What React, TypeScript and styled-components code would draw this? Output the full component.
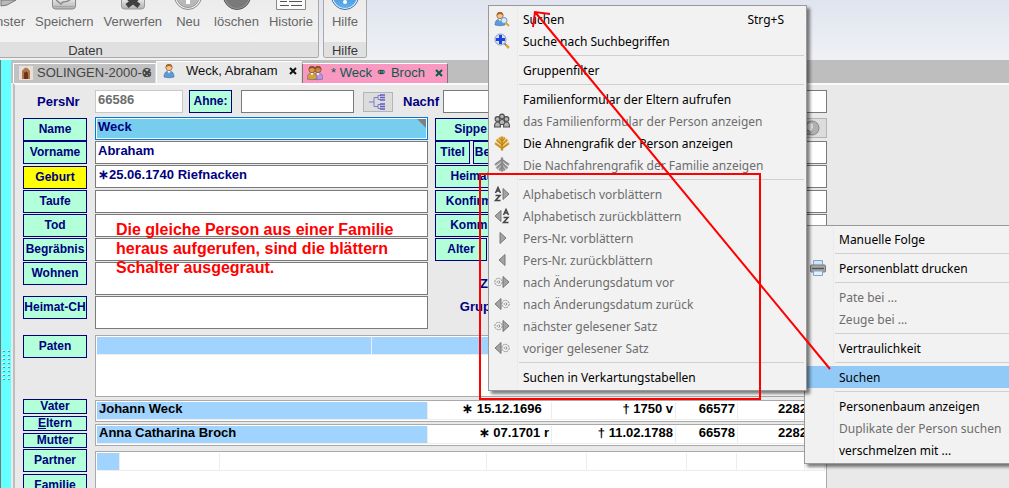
import React from "react";
import styled, { createGlobalStyle, css } from "styled-components";

const NAVY = "#000080";
const MINT = "#b3ffd9";
const ROW_BLUE = "#a0d4ff";

const GlobalStyle = createGlobalStyle`
  * { box-sizing: border-box; }
  body { margin: 0; font-family: "Liberation Sans", Arial, sans-serif; font-size: 13px; }
  button, input { font-family: inherit; margin: 0; }
`;

const Window = styled.div`
  position: relative;
  display: flex;
  flex-direction: column;
  height: 100vh;
  overflow: hidden;
  background: #e9e9e9;
`;

/* ---------- ribbon ---------- */

const Ribbon = styled.header`
  display: flex;
  flex: none;
  align-items: flex-start;
  gap: 4px;
  height: 60px;
  background: linear-gradient(#dfe4ef, #f0f1f4);
`;

const RibbonGroup = styled.section<{ $scrolled?: boolean }>`
  display: flex;
  flex: none;
  flex-direction: column;
  height: 58px;
  border: 1px solid #a9a9a9;
  border-top: 0;
  border-radius: 0 0 3px 3px;
  background: linear-gradient(#ececec, #f5f5f5);
  overflow: hidden;
  ${(p) => p.$scrolled && css`width: 467px; margin-left: -148px;`}
`;

const RibbonTools = styled.div`
  display: flex;
  flex: 1;
  justify-content: flex-end;
  gap: 10px;
  padding: 0 5px;
`;

const RibbonButton = styled.button`
  display: flex;
  flex-direction: column;
  align-items: center;
  gap: 4px;
  padding: 0;
  border: 0;
  background: none;
  color: #666;
  font-size: 13px;
  line-height: 16px;
`;

const RibbonCaption = styled.div`
  height: 15px;
  background: #e0e0e0;
  color: #383838;
  line-height: 17px;
  text-align: center;
`;

/* ---------- workspace ---------- */

const Workspace = styled.div`
  display: flex;
  flex: 1;
  min-height: 0;
`;

const Splitter = styled.div`
  display: flex;
  flex: none;
  align-items: flex-start;
  width: 11px;
  padding: 290px 0 0 1px;
  border-left: 1px solid #777;
  background: #66ffff;
`;

const Document = styled.main`
  display: flex;
  flex: 1;
  flex-direction: column;
  min-width: 0;
`;

const TabStrip = styled.nav`
  display: flex;
  flex: none;
  align-items: flex-end;
  height: 23px;
  padding-left: 2px;
  background: #bebebe;
`;

const Tab = styled.div<{ $kind: "idle" | "active" | "family" }>`
  display: flex;
  align-items: center;
  width: ${(p) => (p.$kind === "idle" ? 143 : 146)}px;
  height: ${(p) => (p.$kind === "active" ? 22 : 20)}px;
  padding: 0 4px ${(p) => (p.$kind === "active" ? 3 : 1)}px;
  border-top: 1px solid #fff;
  border-left: 1px solid ${(p) => (p.$kind === "family" ? "#777" : "#fff")};
  border-right: 1px solid ${(p) => (p.$kind === "family" ? "#777" : "#ddd")};
  background: ${(p) => ({ idle: "#c2c2c2", active: "#e9e9e9", family: "#f999c1" })[p.$kind]};
  color: ${(p) => ({ idle: "#444", active: "#111", family: "#0b5a4c" })[p.$kind]};
`;

const TabTitle = styled.a<{ $indent: number }>`
  flex: 1;
  min-width: 0;
  padding-left: ${(p) => p.$indent}px;
  color: inherit;
  line-height: 18px;
  text-decoration: none;
  white-space: pre;
`;

const Rings = styled.span`
  font-family: "DejaVu Sans", sans-serif;
  font-size: 14px;
  line-height: 14px;
`;

const TabClose = styled.button`
  display: flex;
  flex: none;
  padding: 0;
  border: 0;
  background: none;
  color: inherit;
`;

const Panel = styled.div`
  flex: 1;
  min-height: 0;
  padding: 5px 182px 0 8px;
  border-top: 2px solid #fafafa;
  border-left: 2px solid #bebebe;
  margin-left: 2px;
  overflow: hidden;
`;

/* ---------- form ---------- */

const HeaderRow = styled.div`
  display: grid;
  grid-template-columns: 72px 94px 52px 122px 40px 40px 1fr;
  align-items: center;
  height: 27px;
  padding-bottom: 4px;
`;

const Caption = styled.label<{ $indent?: number }>`
  flex: none;
  padding-left: ${(p) => p.$indent ?? 0}px;
  color: ${NAVY};
  font-weight: bold;
  line-height: 22px;
`;

const Field = styled.input<{ $w?: string; $tall?: boolean; $active?: boolean; $muted?: boolean }>`
  width: ${(p) => p.$w ?? "100%"};
  min-width: 0;
  height: ${(p) => (p.$tall ? 33 : 23)}px;
  padding: 0 2px 5px;
  border: 1px solid ${(p) => (p.$muted ? "#c8c8c8" : "#7a7a7a")};
  border-radius: 0;
  outline: 0;
  background: #fff;
  color: ${(p) => (p.$muted ? "#6d6d6d" : NAVY)};
  font-size: 13px;
  font-weight: bold;
  ${(p) => p.$active && css`
    display: block;
    border-color: #0078d7;
    box-shadow: inset 0 0 0 1px #fff;
    background: #76cdee;
  `}
`;

const CornerMark = styled.div`
  position: relative;
  &::after {
    content: "";
    position: absolute;
    top: 2px;
    right: 2px;
    border-top: 9px solid #808080;
    border-left: 9px solid transparent;
  }
`;

const LabelButton = styled.button<{ $w?: number; $low?: boolean; $yellow?: boolean }>`
  display: flex;
  flex: none;
  align-items: center;
  justify-content: center;
  width: ${(p) => p.$w ?? 64}px;
  height: ${(p) => (p.$low ? 15 : 23)}px;
  padding: 0;
  border: 1px solid ${NAVY};
  background: ${(p) => (p.$yellow ? "#ffff00" : MINT)};
  color: ${NAVY};
  font-size: 12px;
  font-weight: bold;
  line-height: 13px;
  white-space: nowrap;
`;

const IconButton = styled.button<{ $w: number }>`
  display: flex;
  align-items: center;
  justify-content: center;
  width: ${(p) => p.$w}px;
  height: 20px;
  padding: 0;
  border: 1px solid #b4b4b4;
  background: #dcdcdc;
`;

const FieldGrid = styled.div`
  display: grid;
  grid-template-columns: 64px 333px 1fr;
  grid-template-rows: 24px 24px 25px 24px 24px 24px 34px 34px;
  column-gap: 8px;
`;

const LabelCell = styled.div<{ $align?: string }>`
  align-self: ${(p) => p.$align ?? "start"};
`;

const Side = styled.div<{ $align?: string }>`
  display: flex;
  align-self: ${(p) => p.$align ?? "start"};
  gap: 3px;
  margin-left: -1px;
`;

const SideCaption = styled(Caption)`
  width: 71px;
  text-align: right;
`;

const Spacer = styled.span`
  flex: 1;
`;

const Section = styled.div<{ $h: number }>`
  display: grid;
  grid-template-columns: 64px 1fr;
  column-gap: 8px;
  height: ${(p) => p.$h}px;
`;

const Stack = styled.div<{ $pad?: number }>`
  display: flex;
  flex-direction: column;
  gap: 2px;
  padding-top: ${(p) => p.$pad ?? 0}px;
`;

const ListBox = styled.div<{ $h: number }>`
  height: ${(p) => p.$h}px;
  padding: 1px;
  border: 1px solid #a9a9a9;
  background: #fff;
  overflow: hidden;
`;

const DataTable = styled.table`
  width: 100%;
  border-collapse: separate;
  border-spacing: 0;
  table-layout: fixed;
  font-weight: bold;
`;

const Cell = styled.td<{ $on?: boolean; $right?: boolean; $indent?: number }>`
  height: 18px;
  padding: 0 2px 3px ${(p) => p.$indent ?? 2}px;
  border-right: 1px solid #ededed;
  border-bottom: 1px solid #ededed;
  background: ${(p) => (p.$on ? ROW_BLUE : "#fff")};
  color: #000;
  font-size: 13px;
  line-height: 14px;
  text-align: ${(p) => (p.$right ? "right" : "left")};
  white-space: pre;
`;

const Note = styled.p`
  position: absolute;
  top: 220px;
  left: 116px;
  margin: 0;
  color: #ff0000;
  font-size: 16px;
  font-weight: bold;
  line-height: 19px;
`;

/* ---------- menus ---------- */

const Menu = styled.ul<{ $sub?: boolean }>`
  position: absolute;
  z-index: ${(p) => (p.$sub ? 2 : 1)};
  margin: 0;
  padding: 2px;
  border: 1px solid #999;
  background: linear-gradient(90deg, #f1f1f1 28px, #ebebeb 28px, #ebebeb 29px, #f2f2f2 29px);
  box-shadow: 3px 3px 3px rgba(0, 0, 0, 0.5);
  font-family: "Noto Sans", "Open Sans", sans-serif;
  list-style: none;
  ${(p) =>
    p.$sub
      ? css`top: 5px; left: 488px; width: 319px;`
      : css`top: 225px; left: 804px; right: -4px;`}
`;

const Item = styled.button<{ $off?: boolean; $hot?: boolean }>`
  display: grid;
  grid-template-columns: 32px 1fr auto;
  align-items: center;
  width: 100%;
  height: 22px;
  padding: 0 20px 0 0;
  border: 0;
  background: ${(p) => (p.$hot ? "#91c9f7" : "none")};
  color: ${(p) => (p.$off ? "#6d6d6d" : "#000")};
  font-size: 12px;
  text-align: left;
  white-space: nowrap;
`;

const ItemText = styled.span`
  padding-top: 2px;
  line-height: 20px;
`;

const ItemIcon = styled.span`
  display: flex;
  padding-left: 3px;
`;

const Separator = styled.li`
  height: 7px;
  padding: 3px 0 0 28px;
  &::before {
    content: "";
    display: block;
    height: 1px;
    background: #d0d0d0;
  }
`;

const Annotation = styled.svg`
  position: absolute;
  z-index: 3;
  top: 0;
  left: 0;
  pointer-events: none;
`;

/* ---------- drawings ---------- */

const RibbonIcon = ({ kind }: { kind: string }) => (
  <svg width="32" height="10" viewBox="0 0 32 10">
    <defs>
      <linearGradient id="metal" x1="0" y1="0" x2="0" y2="1">
        <stop offset="0" stopColor="#f4f4f4" />
        <stop offset="1" stopColor="#b0b0b0" />
      </linearGradient>
      <linearGradient id="blue" x1="0" y1="0" x2="0" y2="1">
        <stop offset="0" stopColor="#2f7fd0" />
        <stop offset="1" stopColor="#63b0ee" />
      </linearGradient>
    </defs>
    {kind === "window" && <path d="M14 0h15l-9 5-6 1z" fill="#bbb" stroke="#777" />}
    {kind === "save" && (
      <>
        <path d="M4.500-3h23v9q0 3-3 3h-17q-3 0-3-3z" fill="url(#metal)" stroke="#888" />
        <path d="M6 6.500h20" stroke="#a4a4a4" />
        <path d="M8 0l5 4 2-2q5 0 8-3" fill="none" stroke="#888" strokeWidth="1.500" />
      </>
    )}
    {kind === "discard" && (
      <>
        <path d="M4.500-3h23v9q0 3-3 3h-17q-3 0-3-3z" fill="url(#metal)" stroke="#999" />
        <path d="M9-4L22 6M23-4L10 6" stroke="#404040" strokeWidth="5" />
      </>
    )}
    {kind === "new" && (
      <>
        <circle cx="16" cy="-4" r="13.500" fill="#eee" stroke="#8c8c8c" />
        <circle cx="16" cy="-4" r="11.500" fill="#b8b8b8" stroke="#999" />
        <path d="M16-8v12" stroke="#fff" strokeWidth="4" />
      </>
    )}
    {kind === "delete" && (
      <>
        <circle cx="16" cy="-4" r="13.500" fill="#999" stroke="#555" />
        <circle cx="16" cy="-4" r="12" fill="#7a7a7a" />
      </>
    )}
    {kind === "history" && (
      <>
        <path d="M1.500-2h29v11.500h-29z" fill="#fafafa" stroke="#888" />
        <path d="M5 1.500h7m2 0h13M5 5.500h9m2 0h11" stroke="#555" />
      </>
    )}
    {kind === "help" && (
      <>
        <circle cx="16" cy="-4" r="13.500" fill="#e8f2fa" stroke="#3a6fa8" />
        <circle cx="16" cy="-4" r="12" fill="url(#blue)" />
        <circle cx="16" cy="2" r="2" fill="#fff" />
      </>
    )}
  </svg>
);

const Cross = () => (
  <svg width="8" height="8" viewBox="0 0 8 8">
    <path d="M1 1l6 6M7 1L1 7" stroke="currentColor" strokeWidth="2" />
  </svg>
);

const Person = ({ x = 0, hair = "#a8652a", coat = "#5b9bd8", skin = "#f0c490" }) => (
  <g transform={`translate(${x} 0)`}>
    <path d="M1 14q0-6 5-6t5 6q-5 1.500-10 0z" fill={coat} stroke="#3d6da0" strokeWidth=".6" />
    <path d="M4.500 8L6 10.500 7.500 8z" fill="#fff" />
    <circle cx="6" cy="4.500" r="3.200" fill={skin} stroke={hair} strokeWidth=".8" />
    <path d="M2.800 4.500Q2.600 1 6 1t3.200 3.500Q7.500 2.800 6 3T2.800 4.500z" fill={hair} />
  </g>
);

const Sign = ({ kind }: { kind: string }) => {
  const right = "M9 2.500L15 8L9 13.500z";
  const left = "M7 2.500L1 8L7 13.500z";
  const grey = { fill: "#a4a4a4", stroke: "#6e6e6e", strokeWidth: 0.9 };
  const ring = { fill: "none", stroke: "#8a8a8a", strokeDasharray: "2 .8" };
  return (
    <svg width="16" height="16" viewBox="0 0 16 16">
      {kind === "archive" && (
        <>
          <rect x="1" y="1" width="14" height="14" fill="#e8e0d4" />
          <path d="M4 14V6q4-7 8 0v8z" fill="#b07848" />
          <path d="M6 14V8q2-3 4 0v6z" fill="#6e3420" />
        </>
      )}
      {kind === "person" && <Person x={2} />}
      {kind === "family" && (
        <>
          <Person x={5} coat="#c490e0" hair="#8a5420" skin="#c88a48" />
          <Person x={-1} coat="#d8a030" hair="#8a5420" skin="#d89a50" />
        </>
      )}
      {kind === "searchPerson" && (
        <>
          <Person />
          <circle cx="10" cy="9.500" r="3" fill="#d4ecfa" stroke="#6a94bc" />
          <path d="M12 12l3 3" stroke="#e0a030" strokeWidth="2" />
        </>
      )}
      {kind === "zoom" && (
        <>
          <circle cx="6.500" cy="6.500" r="5.500" fill="#cfe2f8" stroke="#8098b8" />
          <path d="M6.500 2v9M2 6.500h9" stroke="#2040e0" strokeWidth="3" />
          <path d="M10.500 10.500l2 2" stroke="#888" strokeWidth="2" />
          <path d="M12.500 12.500l2.500 2.500" stroke="#e8a838" strokeWidth="2.500" />
        </>
      )}
      {kind === "group" && (
        <>
          {[[8, 3.5], [3.5, 6], [12.5, 6]].map(([x, y]) => (
            <g key={x} fill="#b5b5b5" stroke="#4c4c4c" strokeWidth="1.100">
              <path d={`M${x - 3} ${y + 8}q0-5 3-5t3 5z`} />
              <circle cx={x} cy={y} r="2.400" />
            </g>
          ))}
        </>
      )}
      {(kind === "tree" || kind === "treeGrey") && (
        <g stroke={kind === "tree" ? "#a87818" : "#777"} fill="none" transform={kind === "tree" ? "" : "matrix(1 0 0 -1 0 16)"}>
          <path d="M8 15.500V1.500M8 13L1 8M8 13l7-5M8 9.500L2.500 4.500M8 9.500l5.500-5M8 6L5 2.500M8 6l3-3.500" stroke={kind === "tree" ? "#e0a832" : "#a0a0a0"} strokeWidth="2.400" />
          <path d="M8 15.500V1.500M8 13.500L1.500 9M8 13.500l6.500-4.500M8 10L3 5.500M8 10l5-4.500M8 6.500L5.500 3.500M8 6.500l2.500-3" strokeWidth=".8" />
        </g>
      )}
      {(kind === "azNext" || kind === "azPrev") && (
        <g transform={kind === "azNext" ? "" : "translate(8 0)"} fill="none" stroke="#444" strokeWidth="1.500">
          <path d="M1.500 7L4 1.500 6.500 7M2.500 5h3M1.500 9.500h4.500L1.500 14.500h5" />
        </g>
      )}
      {kind === "azNext" && <path d={right} {...grey} />}
      {kind === "azPrev" && <path d={left} {...grey} />}
      {kind === "next" && <path d="M6 2.500L12 8L6 13.500z" {...grey} />}
      {kind === "prev" && <path d="M11 2.500L5 8L11 13.500z" {...grey} />}
      {kind === "dotNext" && (
        <>
          <circle cx="4.500" cy="8" r="3.700" {...ring} />
          <circle cx="4.500" cy="8" r="1.300" {...ring} />
          <path d={right} {...grey} />
        </>
      )}
      {kind === "dotPrev" && (
        <>
          <circle cx="11.500" cy="8" r="3.700" {...ring} />
          <circle cx="11.500" cy="8" r="1.300" {...ring} />
          <path d={left} {...grey} />
        </>
      )}
      {kind === "printer" && (
        <>
          <path d="M3.500 5V.5h9V5" fill="#cfe6fa" stroke="#7fa6c8" />
          <rect x=".5" y="5" width="15" height="7" rx="1" fill="#a8a8a8" stroke="#777" />
          <path d="M2 8.500h12" stroke="#555" strokeWidth="1.500" />
          <path d="M3.500 11h9v4.500h-9z" fill="#e2f0fc" stroke="#7fa6c8" />
        </>
      )}
      {kind === "globe" && (
        <>
          <circle cx="8" cy="8" r="7" fill="#b0b0b0" stroke="#888" />
          <path d="M4 4q5-2 5 2T5 12Q2 7 4 4z" fill="#e4e4e4" />
          <circle cx="4" cy="12.500" r="2" fill="#bbb" stroke="#777" />
        </>
      )}
    </svg>
  );
};

const Pedigree = () => (
  <svg width="18" height="16" viewBox="0 0 18 16" fill="none" stroke="#7c7cc8">
    <path d="M0 8h5M5 3.500v9M5 3.500h4M5 12.500h4M9 1.500v4M9 10.500v4M9 1.500h3M9 5.500h3M9 10.500h3M9 14.500h3" />
    <path d="M11 1h5M11 3.500h5M11 6h5M11 10h5M11 12.500h5M11 15h5" stroke="#5c5cc8" strokeWidth="1.500" />
  </svg>
);

const Grip = () => (
  <svg width="9" height="32" viewBox="0 0 9 32">
    {Array.from({ length: 8 }, (_, i) => (
      <g key={i}>
        <path d={`M0 ${i * 4 + 0.5}h2M5 ${i * 4 + 0.5}h2`} stroke="#e8ffff" />
        <path d={`M1 ${i * 4 + 1.5}h2M6 ${i * 4 + 1.5}h2`} stroke="#3fa0a8" />
      </g>
    ))}
  </svg>
);

/* ---------- content ---------- */

const tools = [
  ["Fenster", "window"],
  ["Speichern", "save"],
  ["Verwerfen", "discard"],
  ["Neu", "new"],
  ["löschen", "delete"],
  ["Historie", "history"],
];

type Entry = { text: string; icon?: string; off?: boolean; hot?: boolean; keys?: string } | null;

const searchMenu: Entry[] = [
  { text: "Suchen", icon: "searchPerson", keys: "Strg+S" },
  { text: "Suche nach Suchbegriffen", icon: "zoom" },
  null,
  { text: "Gruppenfilter" },
  null,
  { text: "Familienformular der Eltern aufrufen" },
  { text: "das Familienformular der Person anzeigen", icon: "group", off: true },
  { text: "Die Ahnengrafik der Person anzeigen", icon: "tree" },
  { text: "Die Nachfahrengrafik der Familie anzeigen", icon: "treeGrey", off: true },
  null,
  { text: "Alphabetisch vorblättern", icon: "azNext", off: true },
  { text: "Alphabetisch zurückblättern", icon: "azPrev", off: true },
  { text: "Pers-Nr. vorblättern", icon: "next", off: true },
  { text: "Pers-Nr. zurückblättern", icon: "prev", off: true },
  { text: "nach Änderungsdatum vor", icon: "dotNext", off: true },
  { text: "nach Änderungsdatum zurück", icon: "dotPrev", off: true },
  { text: "nächster gelesener Satz", icon: "dotNext", off: true },
  { text: "voriger gelesener Satz", icon: "dotPrev", off: true },
  null,
  { text: "Suchen in Verkartungstabellen" },
];

const contextMenu: Entry[] = [
  { text: "Manuelle Folge" },
  null,
  { text: "Personenblatt drucken", icon: "printer" },
  null,
  { text: "Pate bei ...", off: true },
  { text: "Zeuge bei ...", off: true },
  null,
  { text: "Vertraulichkeit" },
  null,
  { text: "Suchen", hot: true },
  null,
  { text: "Personenbaum anzeigen" },
  { text: "Duplikate der Person suchen", off: true },
  { text: "verschmelzen mit ..." },
];

const MenuList = ({ entries, sub }: { entries: Entry[]; sub?: boolean }) => (
  <Menu $sub={sub} role="menu">
    {entries.map((e, i) =>
      e ? (
        <li key={i} role="none">
          <Item role="menuitem" disabled={e.off} $off={e.off} $hot={e.hot}>
            <ItemIcon>{e.icon && <Sign kind={e.icon} />}</ItemIcon>
            <ItemText>{e.text}</ItemText>
            {e.keys && <ItemText>{e.keys}</ItemText>}
          </Item>
        </li>
      ) : (
        <Separator key={i} role="separator" />
      )
    )}
  </Menu>
);

const Parent = ({ cells }: { cells: string[] }) => (
  <ListBox $h={22}>
    <DataTable>
      <colgroup>
        <col width="331" />
        <col width="124" />
        <col width="124" />
        <col width="62" />
        <col />
      </colgroup>
      <tbody>
        <tr>
          {cells.map((c, i) => (
            <Cell key={i} $on={i === 0} $right={i > 0 && i < 4} $indent={i === 4 ? 40 : 2}>
              {c}
            </Cell>
          ))}
        </tr>
      </tbody>
    </DataTable>
  </ListBox>
);

export default function App() {
  return (
    <Window>
      <GlobalStyle />
      <Ribbon>
        <RibbonGroup $scrolled>
          <RibbonTools>
            {tools.map(([label, kind]) => (
              <RibbonButton key={label}>
                <RibbonIcon kind={kind} />
                <span>{label}</span>
              </RibbonButton>
            ))}
          </RibbonTools>
          <RibbonCaption>Daten</RibbonCaption>
        </RibbonGroup>
        <RibbonGroup>
          <RibbonTools>
            <RibbonButton>
              <RibbonIcon kind="help" />
              <span>Hilfe</span>
            </RibbonButton>
          </RibbonTools>
          <RibbonCaption>Hilfe</RibbonCaption>
        </RibbonGroup>
      </Ribbon>

      <Workspace>
        <Splitter>
          <Grip />
        </Splitter>
        <Document>
          <TabStrip>
            <Tab $kind="idle">
              <Sign kind="archive" />
              <TabTitle href="#archiv" $indent={3}>SOLINGEN-2000-G</TabTitle>
              <TabClose aria-label="Schließen"><Cross /></TabClose>
            </Tab>
            <Tab $kind="active">
              <Sign kind="person" />
              <TabTitle href="#person" $indent={9}>Weck, Abraham</TabTitle>
              <TabClose aria-label="Schließen"><Cross /></TabClose>
            </Tab>
            <Tab $kind="family">
              <Sign kind="family" />
              <TabTitle href="#familie" $indent={8}>* Weck <Rings>⚭</Rings> Broch</TabTitle>
              <TabClose aria-label="Schließen"><Cross /></TabClose>
            </Tab>
          </TabStrip>

          <Panel>
            <HeaderRow>
              <Caption htmlFor="persnr" $indent={14}>PersNr</Caption>
              <Field id="persnr" $w="88px" $muted defaultValue="66586" />
              <LabelButton $w={43}>Ahne:</LabelButton>
              <Field aria-label="Ahne" $w="113px" />
              <IconButton $w={30} aria-label="Stammbaum"><Pedigree /></IconButton>
              <Caption htmlFor="nachf">Nachf</Caption>
              <Field id="nachf" />
            </HeaderRow>

            <FieldGrid>
              <LabelCell $align="end"><LabelButton>Name</LabelButton></LabelCell>
              <CornerMark><Field aria-label="Name" $active defaultValue="Weck" /></CornerMark>
              <Side $align="end">
                <LabelButton $w={71}>Sippe</LabelButton>
                <Spacer />
                <IconButton $w={30} aria-label="Karte"><Sign kind="globe" /></IconButton>
              </Side>

              <LabelCell><LabelButton>Vorname</LabelButton></LabelCell>
              <Field aria-label="Vorname" defaultValue="Abraham" />
              <Side>
                <LabelButton $w={35}>Titel</LabelButton>
                <LabelButton $w={35}>Beruf</LabelButton>
                <Field aria-label="Titel und Beruf" />
              </Side>

              <LabelCell $align="center"><LabelButton $yellow>Geburt</LabelButton></LabelCell>
              <Field aria-label="Geburt" defaultValue="∗25.06.1740 Riefnacken" />
              <Side>
                <LabelButton $w={71}>Heimat</LabelButton>
                <Field aria-label="Heimat" />
              </Side>

              <LabelCell><LabelButton>Taufe</LabelButton></LabelCell>
              <Field aria-label="Taufe" />
              <Side>
                <LabelButton $w={71}>Konfirm.</LabelButton>
                <Field aria-label="Konfirmation" />
              </Side>

              <LabelCell><LabelButton>Tod</LabelButton></LabelCell>
              <Field aria-label="Tod" />
              <Side>
                <LabelButton $w={71}>Komm.</LabelButton>
                <Field aria-label="Kommunion" />
              </Side>

              <LabelCell><LabelButton>Begräbnis</LabelButton></LabelCell>
              <Field aria-label="Begräbnis" />
              <Side>
                <LabelButton $w={52}>Alter</LabelButton>
                <Field aria-label="Alter" />
              </Side>

              <LabelCell><LabelButton>Wohnen</LabelButton></LabelCell>
              <Field aria-label="Wohnen" $tall />
              <Side $align="end">
                <SideCaption htmlFor="zivil">Zivil</SideCaption>
                <Field id="zivil" />
              </Side>

              <LabelCell><LabelButton>Heimat-CH</LabelButton></LabelCell>
              <Field aria-label="Heimat-CH" $tall />
              <Side>
                <SideCaption htmlFor="gruppe">Gruppe</SideCaption>
                <Field id="gruppe" />
              </Side>
            </FieldGrid>

            <Section $h={69}>
              <Stack $pad={5}>
                <LabelButton>Paten</LabelButton>
              </Stack>
              <Stack $pad={5}>
                <ListBox $h={62}>
                  <DataTable>
                    <colgroup>
                      <col width="275" />
                      <col />
                    </colgroup>
                    <tbody>
                      <tr><Cell $on /><Cell $on /></tr>
                    </tbody>
                  </DataTable>
                </ListBox>
              </Stack>
            </Section>

            <Section $h={50}>
              <Stack>
                <LabelButton $low>Vater</LabelButton>
                <LabelButton $low><u>E</u>ltern</LabelButton>
                <LabelButton $low>Mutter</LabelButton>
              </Stack>
              <Stack $pad={1}>
                <Parent cells={["Johann Weck", "∗ 15.12.1696  ", "† 1750 v", "66577", "2282"]} />
                <Parent cells={["Anna Catharina Broch", "∗ 07.1701 r", "† 11.02.1788", "66578", "2282"]} />
              </Stack>
            </Section>

            <Section $h={80}>
              <Stack>
                <LabelButton>Partner</LabelButton>
                <LabelButton>Familie</LabelButton>
              </Stack>
              <Stack $pad={2}>
                <ListBox $h={78}>
                  <DataTable>
                    <colgroup>
                      {[23, 100, 267, 100, 100, 50, 68].map((w, i) => (
                        <col key={i} width={w} />
                      ))}
                      <col />
                    </colgroup>
                    <tbody>
                      <tr>
                        <Cell $on /><Cell /><Cell /><Cell /><Cell /><Cell /><Cell /><Cell />
                      </tr>
                    </tbody>
                  </DataTable>
                </ListBox>
              </Stack>
            </Section>
          </Panel>
        </Document>
      </Workspace>

      <Note>
        Die gleiche Person aus einer Familie
        <br />
        heraus aufgerufen, sind die blättern
        <br />
        Schalter ausgegraut.
      </Note>

      <MenuList entries={contextMenu} />
      <MenuList entries={searchMenu} sub />

      <Annotation width="840" height="410" viewBox="0 0 840 410" fill="none" stroke="#ff0000" strokeWidth="2">
        <rect x="480" y="174" width="280" height="225" />
        <path d="M830 369L535 12M550 14L535 12L533 27" />
      </Annotation>
    </Window>
  );
}
